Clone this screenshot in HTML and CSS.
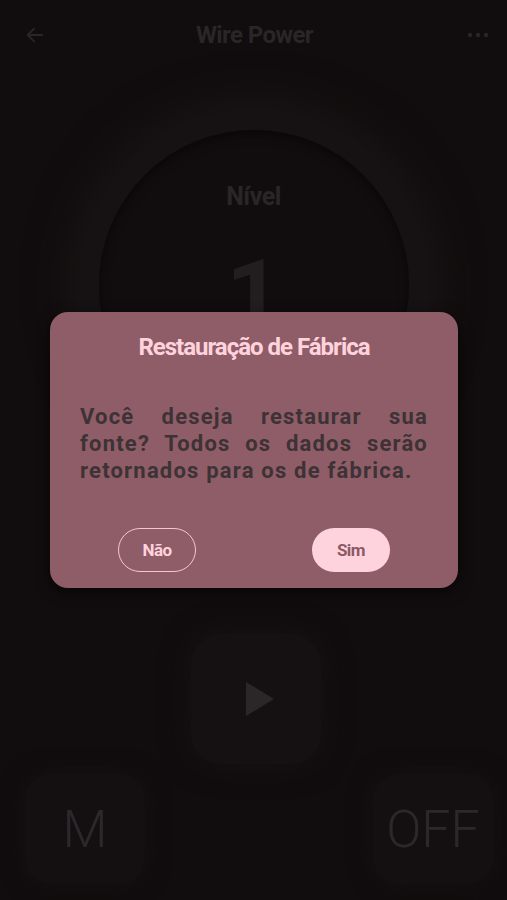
FILE: index.html
```html
<!DOCTYPE html>
<html lang="pt">
<head>
<meta charset="utf-8">
<title>Wire Power</title>
<link rel="stylesheet" href="styles.css">
</head>
<body>
<div class="screen">
  <header class="topbar">
    <svg class="icon back" width="22" height="22" viewBox="0 0 24 24"><path d="M20 12H5M11 5l-7 7 7 7" fill="none" stroke="currentColor" stroke-width="2" stroke-linecap="round" stroke-linejoin="round"/></svg>
    <h1 class="title">Wire Power</h1>
    <svg class="icon more" width="22" height="8" viewBox="0 0 22 8"><circle cx="3" cy="4" r="2.2" fill="currentColor"/><circle cx="11" cy="4" r="2.2" fill="currentColor"/><circle cx="19" cy="4" r="2.2" fill="currentColor"/></svg>
  </header>

  <section class="dial">
    <div class="dial-outer">
      <div class="dial-inner">
        <div class="dial-label">Nível</div>
        <div class="dial-value">1</div>
      </div>
    </div>
  </section>

  <section class="play-row">
    <div class="play-btn">
      <svg width="30" height="36" viewBox="0 0 30 36"><path d="M1 1 L29 18 L1 35 Z" fill="currentColor"/></svg>
    </div>
  </section>

  <section class="bottom-row">
    <div class="mode-btn">M</div>
    <div class="mode-btn">OFF</div>
  </section>

  <div class="dialog">
    <h2 class="dialog-title">Restauração de Fábrica</h2>
    <p class="dialog-text">Você deseja restaurar sua fonte? Todos os dados serão retornados para os de fábrica.</p>
    <div class="dialog-actions">
      <button class="btn btn-outline">Não</button>
      <button class="btn btn-fill">Sim</button>
    </div>
  </div>
</div>
</body>
</html>
```

FILE: styles.css
```css
* { box-sizing: border-box; }
html, body {
  margin: 0;
  padding: 0;
  background: #110c0d;
}
body {
  font-family: Roboto, "Noto Sans", sans-serif;
}
.screen {
  position: relative;
  width: 507px;
  height: 900px;
  overflow: hidden;
  display: flex;
  flex-direction: column;
  background: #110c0d;
}
.topbar {
  height: 70px;
  display: flex;
  align-items: center;
  justify-content: space-between;
  padding: 0 18px 0 24px;
}
.icon { color: #2a2527; }
.title {
  margin: 0;
  font-size: 24px;
  font-weight: 700;
  color: #2a2527;
  letter-spacing: -0.6px;
  transform: translateX(-2px);
}
.dial {
  margin-top: 38px;
  display: flex;
  justify-content: center;
}
.dial-outer {
  width: 354px;
  height: 354px;
  border-radius: 50%;
  background: #161213;
  box-shadow: 0 0 40px 10px rgba(30, 26, 27, 0.6);
  display: flex;
  align-items: center;
  justify-content: center;
}
.dial-inner {
  width: 310px;
  height: 310px;
  border-radius: 50%;
  background: #110d0e;
  display: flex;
  flex-direction: column;
  align-items: center;
  box-shadow: inset 0 4px 10px rgba(0,0,0,0.5);
}
.dial-label {
  margin-top: 52px;
  font-size: 25px;
  font-weight: 700;
  letter-spacing: -0.5px;
  color: #2a2526;
}
.dial-value {
  margin-top: 36px;
  font-size: 96px;
  font-weight: 700;
  line-height: 1;
  color: #221e1f;
}
.play-row {
  margin-top: 172px;
  display: flex;
  justify-content: center;
}
.play-btn {
  width: 130px;
  height: 130px;
  border-radius: 30px;
  background: #151112;
  box-shadow: 0 0 24px 6px rgba(22, 18, 19, 0.8);
  display: flex;
  align-items: center;
  justify-content: center;
  color: #2b2628;
  padding-left: 8px;
  transform: translateX(2px);
}
.bottom-row {
  margin-top: 10px;
  display: flex;
  justify-content: space-between;
  padding: 0 14px 0 25px;
}
.mode-btn {
  width: 120px;
  height: 110px;
  border-radius: 26px;
  background: #141011;
  box-shadow: 0 0 20px 4px rgba(22, 18, 19, 0.7);
  display: flex;
  align-items: center;
  justify-content: center;
  font-family: "Roboto", sans-serif;
  font-weight: 300;
  font-size: 52px;
  color: #2b272b;
  letter-spacing: 0px;
}
.dialog {
  position: absolute;
  left: 50px;
  top: 312px;
  width: 408px;
  height: 276px;
  border-radius: 18px;
  background: #8f5d68;
  box-shadow: 0 4px 14px rgba(0,0,0,0.5);
  padding: 19px 30px 16px;
  display: flex;
  flex-direction: column;
}
.dialog-title {
  margin: 0;
  text-align: center;
  font-size: 24px;
  line-height: 32px;
  font-weight: 700;
  color: #ffd3dd;
  letter-spacing: -1px;
}
.dialog-text {
  margin: 40px 0 0;
  font-size: 22px;
  line-height: 27px;
  font-weight: 700;
  color: #3d3235;
  text-align: justify;
  letter-spacing: 1.2px;
}
.dialog-actions {
  margin-top: auto;
  display: flex;
  justify-content: space-between;
  padding: 0 38px;
}
.btn {
  width: 78px;
  height: 44px;
  border-radius: 22px;
  font-family: Roboto, sans-serif;
  font-size: 17px;
  font-weight: 700;
  letter-spacing: -0.5px;
  cursor: pointer;
}
.btn-outline {
  background: transparent;
  border: 1.5px solid #f3c7d1;
  color: #ffd3dd;
}
.btn-fill {
  background: #ffd3dd;
  border: none;
  color: #8a5965;
}
```
